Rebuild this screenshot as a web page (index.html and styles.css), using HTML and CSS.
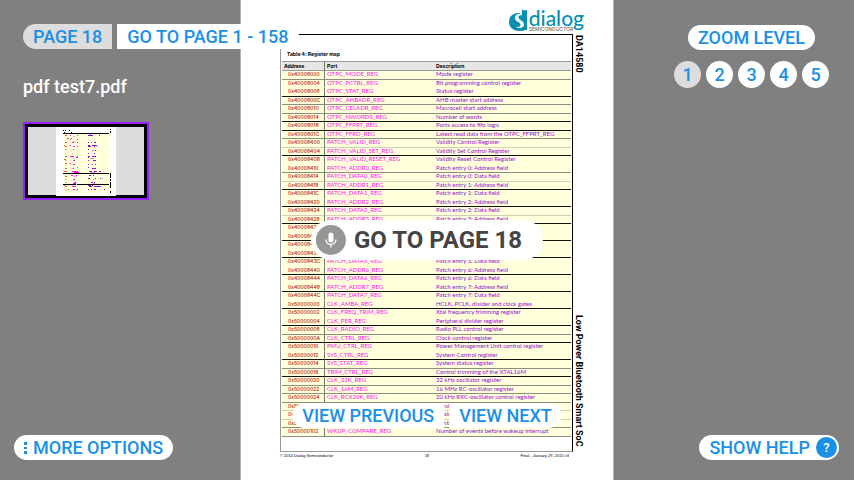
FILE: index.html
```html
<!DOCTYPE html>
<html lang="en">
<head>
<meta charset="utf-8">
<title>pdf test7.pdf</title>
<link rel="stylesheet" href="styles.css">
</head>
<body>
<div class="viewer">
  <aside class="panel panel-left">
    <div class="file-tools">
      <div class="group">
        <button class="btn btn-first current">PAGE 18</button>
        <button class="btn btn-last">GO TO PAGE 1 - 158</button>
      </div>
      <h1 class="file-name">pdf test7.pdf</h1>
      <button class="thumb" aria-label="Page 18 thumbnail">
        <svg viewBox="0 0 60 69" shape-rendering="crispEdges">
          <path fill="#fff" d="M0 0h60v69H0z"/>
          <path fill="#ffffdc" d="M7 7h46v59H7z"/>
          <path stroke="#000" d="M7 6.500h46M7 46.500h46M7 57.500h46M7 3.500h1M9 3.500h1M13 3.500h1M8 5.500h1M15 5.500h1M54.500 2v1M54.500 4v2M54.500 46v5M54.500 52v2M54.500 55v6M54.500 64v2"/>
          <path stroke="#d9584a" d="M9 8.500h2M11 11.500h2M9 15.500h2M8 18.500h1M9 19.500h2M9 29.500h2M8 32.500h2M9 36.500h2M9 41.500h2M8 44.500h3M9 49.500h2M9 52.500h1M8 58.500h1M9 59.500h2M12 62.500h1"/>
          <path stroke="#f3b9a0" d="M9 22.500h2M9 26.500h1M9 33.500h2M9 38.500h1M9 48.500h1M9 55.500h2M9 63.500h1"/>
          <path stroke="#ff10ee" d="M14 8.500h1M21 8.500h1M15 11.500h1M14 12.500h1M21 12.500h1M16 15.500h2M21 15.500h1M14 18.500h1M17 19.500h2M21 19.500h1M17 22.500h1M14 29.500h4M21 29.500h1M17 33.500h2M20 30.500h2M14 36.500h1M17 37.500h2M17 41.500h1M21 40.500h1M16 44.500h6M18 45.500h5M15 48.500h2M20 48.500h1M17 52.500h2M18 55.500h2M17 56.500h3M16 59.500h4M17 62.500h2M21 62.500h1"/>
          <path stroke="#fbb0ed" d="M17 9.500h2M17 14.500h3M20 18.500h1M16 26.500h1M21 26.500h1M17 31.500h2M15 41.500h2M17 49.500h4M20 57.500h1M20 63.500h1"/>
          <path stroke="#9410d0" d="M32 8.500h5M43 8.500h1M32 15.500h1M35 15.500h1M38 15.500h2M32 18.500h2M36 18.500h5M32 19.500h3M38 19.500h1M32 22.500h1M39 23.500h1M32 26.500h1M38 26.500h1M32 29.500h2M36 29.500h4M32 30.500h1M32 33.500h1M37 33.500h3M32 37.500h1M36 37.500h1M39 37.500h1M32 40.500h1M36 41.500h4M33 44.500h3M38 44.500h3M43 44.500h2M33 48.500h2M37 48.500h1M32 51.500h2M39 51.500h1M44 51.500h1M35 55.500h2M38 55.500h1M32 58.500h3M36 58.500h1M33 59.500h3M38 59.500h7M32 62.500h1M35 62.500h1M38 62.500h2M48 62.500h1"/>
          <path stroke="#c98ad8" d="M33 7.500h2M41 19.500h1M36 23.500h2M34 31.500h4M35 45.500h4M37 52.500h1M46 51.500h1M37 56.500h2M41 58.500h1"/>
        </svg>
      </button>
    </div>
    <button class="btn more"><svg class="dots" viewBox="0 0 3 13"><path fill="currentColor" d="M0 1h3v3H0zM0 6h3v2H0zM0 10h3v3H0z"/></svg>MORE OPTIONS</button>
  </aside>

  <main class="sheet">
    <header class="brand">
      <svg class="brand-mark" viewBox="0 0 18 22"><path fill="#0590b2" d="M13 0C15 2 16 1.500 18 1v20c-2 0-3 .5-5 1-8 .5-13-3-13-9C0 8 3 4.500 9 4c2 0 3 1 4 2z"/><path fill="#fff" d="M13.500 6.500C10 3.500 6 5.500 6 9c0 4 5 3.500 5.500 6.500.3 2-2 3-4.500 2 2 2.500 7.500 2 8-1.500.5-4-5-5-5.500-7.500C9.200 6.500 11 6 13.500 6.500z"/></svg>
      <div class="brand-name"><span class="brand-word">dialog</span><span class="brand-sub">SEMICONDUCTOR</span></div>
    </header>
    <div class="sheet-body">
      <div class="frame">
        <table class="registers">
          <caption>Table 4: Register map</caption>
          <thead><tr><th>Address</th><th>Port</th><th>Description</th></tr></thead>
          <tbody>
            <tr class="mid"><td>0x40008000</td><td>OTPC_MODE_REG</td><td>Mode register</td></tr>
            <tr><td>0x40008004</td><td>OTPC_PCTRL_REG</td><td>Bit programming control register</td></tr>
            <tr class="dark"><td>0x40008008</td><td>OTPC_STAT_REG</td><td>Status register</td></tr>
            <tr class="mid"><td>0x4000800C</td><td>OTPC_AHBADR_REG</td><td>AHB master start address</td></tr>
            <tr class="mid"><td>0x40008010</td><td>OTPC_CELADR_REG</td><td>Macrocell start address</td></tr>
            <tr class="dark"><td>0x40008014</td><td>OTPC_NWORDS_REG</td><td>Number of words</td></tr>
            <tr class="dark"><td>0x40008018</td><td>OTPC_FFPRT_REG</td><td>Ports access to fifo logic</td></tr>
            <tr class="mid"><td>0x4000801C</td><td>OTPC_FFRD_REG</td><td>Latest read data from the OTPC_FFPRT_REG</td></tr>
            <tr class="light"><td>0x40008400</td><td>PATCH_VALID_REG</td><td>Validity Control Register</td></tr>
            <tr class="dark"><td>0x40008404</td><td>PATCH_VALID_SET_REG</td><td>Validity Set Control Register</td></tr>
            <tr><td>0x40008408</td><td>PATCH_VALID_RESET_REG</td><td>Validity Reset Control Register</td></tr>
            <tr class="mid"><td>0x40008410</td><td>PATCH_ADDR0_REG</td><td>Patch entry 0: Address field</td></tr>
            <tr class="light"><td>0x40008414</td><td>PATCH_DATA0_REG</td><td>Patch entry 0: Data field</td></tr>
            <tr class="dark"><td>0x40008418</td><td>PATCH_ADDR1_REG</td><td>Patch entry 1: Address field</td></tr>
            <tr><td>0x4000841C</td><td>PATCH_DATA1_REG</td><td>Patch entry 1: Data field</td></tr>
            <tr class="dark"><td>0x40008420</td><td>PATCH_ADDR2_REG</td><td>Patch entry 2: Address field</td></tr>
            <tr class="light"><td>0x40008424</td><td>PATCH_DATA2_REG</td><td>Patch entry 2: Data field</td></tr>
            <tr class="dark"><td>0x40008428</td><td>PATCH_ADDR3_REG</td><td>Patch entry 3: Address field</td></tr>
            <tr><td>0x4000842C</td><td>PATCH_DATA3_REG</td><td>Patch entry 3: Data field</td></tr>
            <tr class="dark"><td>0x40008430</td><td>PATCH_ADDR4_REG</td><td>Patch entry 4: Address field</td></tr>
            <tr><td>0x40008434</td><td>PATCH_DATA4_REG</td><td>Patch entry 4: Data field</td></tr>
            <tr class="dark"><td>0x40008438</td><td>PATCH_ADDR5_REG</td><td>Patch entry 5: Address field</td></tr>
            <tr><td>0x4000843C</td><td>PATCH_DATA5_REG</td><td>Patch entry 5: Data field</td></tr>
            <tr class="dark"><td>0x40008440</td><td>PATCH_ADDR6_REG</td><td>Patch entry 6: Address field</td></tr>
            <tr><td>0x40008444</td><td>PATCH_DATA6_REG</td><td>Patch entry 6: Data field</td></tr>
            <tr class="dark"><td>0x40008448</td><td>PATCH_ADDR7_REG</td><td>Patch entry 7: Address field</td></tr>
            <tr><td>0x4000844C</td><td>PATCH_DATA7_REG</td><td>Patch entry 7: Data field</td></tr>
            <tr class="dark"><td>0x50000000</td><td>CLK_AMBA_REG</td><td>HCLK, PCLK, divider and clock gates</td></tr>
            <tr><td>0x50000002</td><td>CLK_FREQ_TRIM_REG</td><td>Xtal frequency trimming register</td></tr>
            <tr class="dark"><td>0x50000004</td><td>CLK_PER_REG</td><td>Peripheral divider register</td></tr>
            <tr class="mid"><td>0x50000008</td><td>CLK_RADIO_REG</td><td>Radio PLL control register</td></tr>
            <tr class="dark"><td>0x5000000A</td><td>CLK_CTRL_REG</td><td>Clock control register</td></tr>
            <tr><td>0x50000010</td><td>PMU_CTRL_REG</td><td>Power Management Unit control register</td></tr>
            <tr class="dark"><td>0x50000012</td><td>SYS_CTRL_REG</td><td>System Control register</td></tr>
            <tr class="mid"><td>0x50000014</td><td>SYS_STAT_REG</td><td>System status register</td></tr>
            <tr class="dark"><td>0x50000016</td><td>TRIM_CTRL_REG</td><td>Control trimming of the XTAL16M</td></tr>
            <tr class="mid"><td>0x50000020</td><td>CLK_32K_REG</td><td>32 kHz oscillator register</td></tr>
            <tr class="mid"><td>0x50000022</td><td>CLK_16M_REG</td><td>16 MHz RC-oscillator register</td></tr>
            <tr class="mid"><td>0x50000024</td><td>CLK_RCX20K_REG</td><td>20 kHz RXC-oscillator control register</td></tr>
            <tr class="light"><td>0x50000026</td><td>BANDGAP_REG</td><td>Bandgap trimming</td></tr>
            <tr class="light"><td>0x50000028</td><td>ANA_STATUS_REG</td><td>Analog status</td></tr>
            <tr class="mid"><td>0x50000100</td><td>WKUP_CTRL_REG</td><td>Control register</td></tr>
            <tr class="mid"><td>0x50000102</td><td>WKUP_COMPARE_REG</td><td>Number of events before wakeup interrupt</td></tr>
          </tbody>
        </table>
      </div>
      <div class="spine"><span class="part">DA14580</span><span class="product">Low Power Bluetooth Smart SoC</span></div>
    </div>
    <footer class="sheet-foot"><span>© 2014 Dialog Semiconductor</span><span>18</span><span>Final - January 29, 2015 v3</span></footer>
  </main>

  <aside class="panel panel-right">
    <div class="zoom">
      <button class="btn">ZOOM LEVEL</button>
      <div class="levels">
        <button class="level current">1</button>
        <button class="level">2</button>
        <button class="level">3</button>
        <button class="level">4</button>
        <button class="level">5</button>
      </div>
    </div>
    <button class="btn help">SHOW HELP<span class="help-mark">?</span></button>
  </aside>

  <div class="command" role="status">
    <svg class="mic" viewBox="0 0 30 30"><circle cx="15" cy="15" r="15" fill="#969696"/><rect x="12.500" y="7.500" width="5" height="10" rx="2.500" fill="#fff"/><path d="M10 14.500c0 6.500 10 6.500 10 0M15 19.500v3" fill="none" stroke="#fff" stroke-width="1.300"/></svg>
    <span>GO TO PAGE 18</span>
  </div>
  <nav class="pager group">
    <button class="btn btn-first">VIEW PREVIOUS</button>
    <button class="btn btn-last">VIEW NEXT</button>
  </nav>
</div>
</body>
</html>
```
FILE: styles.css
```css
* { box-sizing: border-box; }

body {
  margin: 0;
  background: #808080;
  font-family: Roboto, "Liberation Sans", sans-serif;
}

button {
  border: 0;
  padding: 0;
  font: inherit;
  cursor: pointer;
}

.viewer {
  position: relative;
  display: grid;
  grid-template-columns: minmax(0, 1fr) 374px minmax(0, 1fr);
  min-height: 100vh;
}

/* Side panels */
.panel {
  display: flex;
  flex-direction: column;
  justify-content: space-between;
  position: relative;
  z-index: 1;
  padding-bottom: 20px;
}
.panel-left { align-items: flex-start; padding-top: 24px; padding-left: 14px; }
.panel-right { align-items: flex-end; padding-top: 25px; padding-right: 15px; }

.group { display: flex; gap: 5px; }

.btn {
  display: flex;
  align-items: center;
  height: 25px;
  padding: 0 10px;
  border-radius: 13px;
  background: #fff;
  color: #1a90e6;
  font-size: 18px;
  font-weight: 500;
  line-height: 25px;
  white-space: nowrap;
}
.btn-first { border-radius: 13px 0 0 13px; }
.btn-last { border-radius: 0 13px 13px 0; }
.btn.current, .level.current { background: #ddd; }

.file-tools { padding-left: 9px; }
.file-name {
  margin: 27px 0 24px;
  color: #fff;
  font-size: 18px;
  font-weight: 500;
  line-height: 22px;
}
.thumb {
  display: flex;
  justify-content: center;
  width: 126px;
  height: 78px;
  padding: 3px;
  border: 2px solid #9122ff;
  background: #ddd;
  box-shadow: inset 0 0 0 3px #000;
}
.thumb svg { width: 60px; height: 69px; }

.more { gap: 6px; }
.dots { width: 3px; height: 13px; }

.zoom {
  display: flex;
  flex-direction: column;
  align-items: center;
  gap: 11px;
  padding-right: 10px;
}
.levels { display: flex; gap: 5px; }
.level {
  width: 27px;
  height: 27px;
  border-radius: 50%;
  background: #fff;
  color: #1a90e6;
  font-size: 18px;
  font-weight: 500;
  line-height: 27px;
}
.help { gap: 6px; padding-right: 2px; }
.help-mark {
  width: 21px;
  height: 21px;
  border-radius: 50%;
  background: #1a90e6;
  color: #fff;
  font-size: 13px;
  line-height: 21px;
  text-align: center;
}

/* Document page */
.sheet {
  display: flex;
  flex-direction: column;
  padding: 9px 29px 20px 39px;
  border: solid #b4b4b4;
  border-width: 0 1px;
  background: #fff;
  color: #000;
  font-family: Inter, "Liberation Sans", sans-serif;
  font-size: 5px;
  line-height: 7px;
}
.brand {
  display: flex;
  justify-content: flex-end;
  gap: 2px;
  height: 25px;
}
.brand-mark { width: 18px; height: 22px; }
.brand-name { display: flex; flex-direction: column; }
.brand-word {
  color: #0590b2;
  font-family: Lato, sans-serif;
  font-size: 21px;
  font-weight: 500;
  line-height: 18px;
}
.brand-sub { color: #555544; line-height: 5px; }

.sheet-body { display: flex; flex: 1; }
.frame {
  flex: 1;
  min-width: 0;
  padding: 0 1px;
  border: 1px solid #999;
  border-top-color: #000;
  border-right-color: #000;
}
.registers {
  width: 100%;
  border-spacing: 0;
  table-layout: fixed;
}
.registers caption {
  padding: 14px 0 2px 5px;
  font-weight: 700;
  line-height: 10px;
  text-align: left;
}
.registers th {
  height: 10px;
  padding: 0 2px;
  border: solid #999;
  border-width: 1px 0;
  background: #e6e6e6;
  font-weight: 700;
  text-align: left;
}
.registers th:nth-child(1) { width: 43px; }
.registers th:nth-child(2) { width: 109px; }
.registers th:nth-child(1), .registers td:nth-child(1) { border-right: 1px solid #777766; }
.registers td {
  height: 8px;
  padding: 0 2px;
  border-bottom: 1px solid #ffffdc;
  background: #ffffdc;
  color: #9410d0;
  font-family: Lato, sans-serif;
  font-size: 6px;
  line-height: 6px;
  vertical-align: top;
  white-space: nowrap;
}
.registers tr:nth-child(odd) td { height: 9px; }
.registers td:nth-child(1) {
  padding-left: 6px;
  color: #b81c10;
  font-family: Inter, sans-serif;
  font-size: 5px;
  font-weight: 500;
  line-height: 7px;
}
.registers td:nth-child(2) { color: #ff10ee; }
.registers .dark td { border-bottom-color: #111; }
.registers .mid td { border-bottom-color: #8c8c80; }
.registers .light td { border-bottom-color: #d0d0b8; }

.spine {
  display: flex;
  justify-content: space-between;
  padding: 1px 0 5px 1px;
  font-family: Roboto, sans-serif;
  font-size: 9px;
  font-weight: 700;
  line-height: 10px;
  writing-mode: vertical-rl;
}
.sheet-foot {
  display: flex;
  justify-content: space-between;
  padding: 0 15px 0 0;
  font-family: "Liberation Sans", sans-serif;
  font-size: 4px;
  line-height: 8px;
}

/* Controls over the page */
.command {
  position: absolute;
  z-index: 2;
  top: 50%;
  left: 50%;
  display: flex;
  align-items: center;
  gap: 8px;
  height: 40px;
  padding: 0 21px 0 5px;
  border-radius: 20px;
  background: #fff;
  color: #444;
  font-size: 24px;
  font-weight: 700;
  white-space: nowrap;
  transform: translate(-50%, -50%);
}
.mic { width: 30px; height: 30px; }
.pager {
  position: absolute;
  z-index: 2;
  bottom: 52px;
  left: 50%;
  transform: translateX(-50%);
}
```
